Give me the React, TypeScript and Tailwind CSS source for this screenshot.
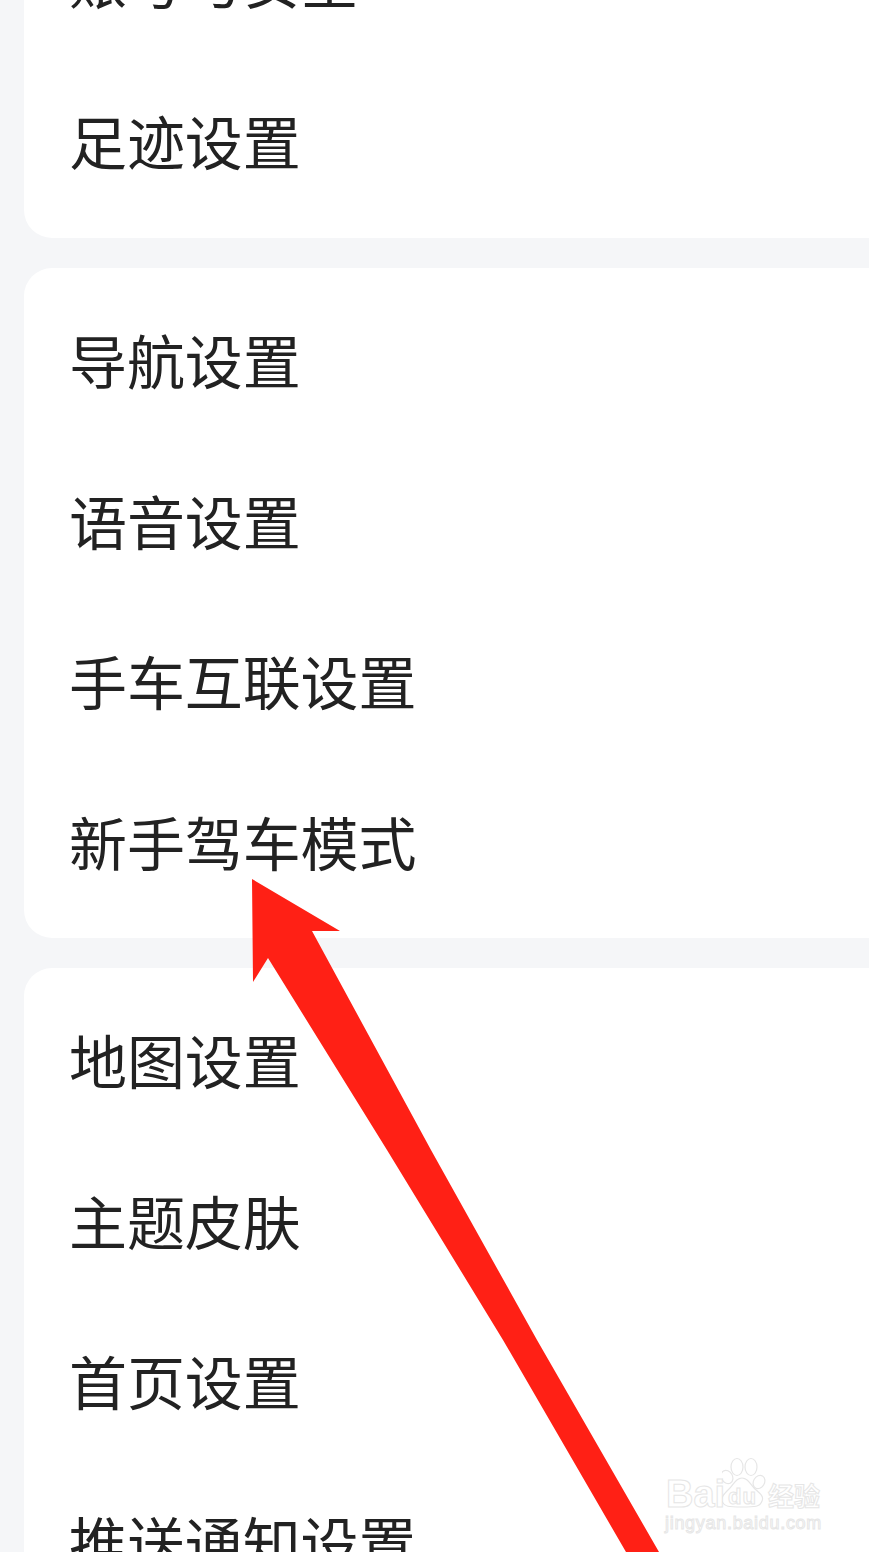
const groups = [
  { rows: ["账号与安全", "足迹设置"], cls: "pb-[15px]" },
  { rows: ["导航设置", "语音设置", "手车互联设置", "新手驾车模式"], cls: "pt-[14px] pb-[14px]" },
  { rows: ["地图设置", "主题皮肤", "首页设置", "推送通知设置"], cls: "pt-[14px]" },
];

function Watermark() {
  return (
    <div className="absolute left-[664px] top-[1456px] h-[80px] w-[160px] font-['Liberation_Sans',sans-serif] text-transparent [-webkit-text-stroke:1px_#e6e6e6]">
      <svg className="absolute left-[58px] top-0 h-[54px] w-[50px]" viewBox="0 0 50 54" fill="#fff" stroke="#e6e6e6" strokeWidth="1.2">
        <ellipse cx="5" cy="21" rx="5.5" ry="7" transform="rotate(-30 5 21)" />
        <ellipse cx="15" cy="11" rx="6" ry="8.5" />
        <ellipse cx="29" cy="11" rx="6" ry="8.5" />
        <ellipse cx="37" cy="26" rx="5.5" ry="7" transform="rotate(30 37 26)" />
        <path d="M20 22c6 0 8 6 13 11 6 5 9 8 7 12-2 6-7 6-20 6s-18 0-20-6c-1-4 2-7 7-12 5-5 7-11 13-11z" />
      </svg>
      <div className="absolute left-[2px] top-[19px] text-[38px] leading-[38px] font-bold">Bai</div>
      <div className="absolute left-[64px] top-[30px] text-[22px] leading-[22px] font-bold tracking-[1px]">du</div>
      <div className="absolute left-[104px] top-[24px] font-['Noto_Sans_CJK_SC',sans-serif] text-[26px] leading-[30px] font-bold">经验</div>
      <div className="absolute left-[1px] top-[57px] text-[18px] leading-[20px] tracking-[0.7px] whitespace-nowrap">jingyan.baidu.com</div>
    </div>
  );
}

export default function App() {
  return (
    <div className="relative h-[1552px] w-[869px] overflow-hidden bg-[#f5f6f8] font-['Noto_Sans_CJK_SC',sans-serif] text-[#222222]">
      <div className="-mt-[98px] flex flex-col gap-[30px] pl-[24px]">
        {groups.map((g, i) => (
          <div key={i} className={`rounded-l-[28px] bg-white pl-[45px] ${g.cls}`}>
            {g.rows.map((r) => (
              <div key={r} className="flex h-[160.5px] items-center pb-[6px] text-[58px] leading-none tracking-[-0.1px]">
                {r}
              </div>
            ))}
          </div>
        ))}
      </div>
      <Watermark />
      <svg className="absolute left-0 top-0 h-[1552px] w-[869px]" viewBox="0 0 869 1552">
        <polygon points="252,879 340,931 312,931 431,1150 537,1340 659,1552 626,1552 503,1340 387,1150 268,958 253,982" fill="#ff2015" />
      </svg>
    </div>
  );
}
